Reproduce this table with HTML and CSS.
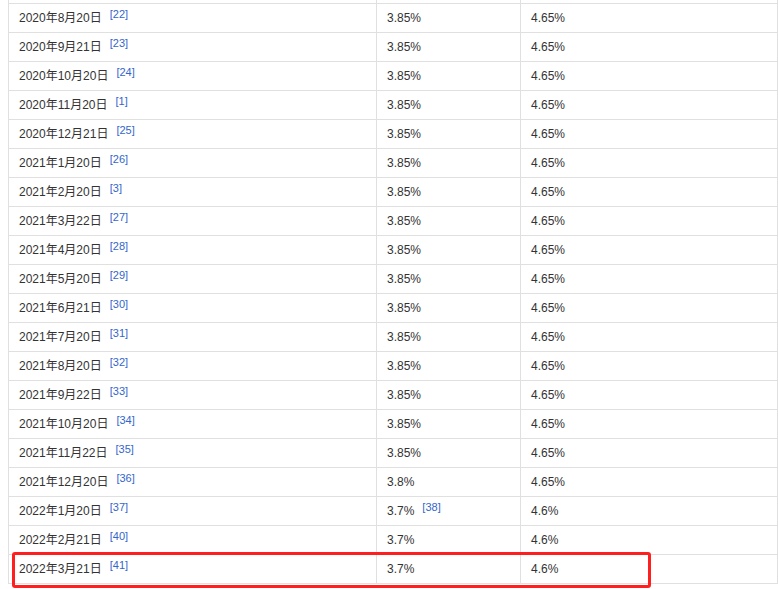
FILE: index.html
```html
<!DOCTYPE html>
<html lang="zh">
<head>
<meta charset="utf-8">
<link rel="stylesheet" href="styles.css">
</head>
<body>
<div class="wrap">
<table class="rates">
<colgroup><col class="c1"><col class="c2"><col class="c3"></colgroup>
<tbody>
<tr class="prev"><td></td><td></td><td></td></tr>
<tr><td>2020年8月20日<sup>[22]</sup></td><td>3.85%</td><td>4.65%</td></tr>
<tr><td>2020年9月21日<sup>[23]</sup></td><td>3.85%</td><td>4.65%</td></tr>
<tr><td>2020年10月20日<sup>[24]</sup></td><td>3.85%</td><td>4.65%</td></tr>
<tr><td>2020年11月20日<sup>[1]</sup></td><td>3.85%</td><td>4.65%</td></tr>
<tr><td>2020年12月21日<sup>[25]</sup></td><td>3.85%</td><td>4.65%</td></tr>
<tr><td>2021年1月20日<sup>[26]</sup></td><td>3.85%</td><td>4.65%</td></tr>
<tr><td>2021年2月20日<sup>[3]</sup></td><td>3.85%</td><td>4.65%</td></tr>
<tr><td>2021年3月22日<sup>[27]</sup></td><td>3.85%</td><td>4.65%</td></tr>
<tr><td>2021年4月20日<sup>[28]</sup></td><td>3.85%</td><td>4.65%</td></tr>
<tr><td>2021年5月20日<sup>[29]</sup></td><td>3.85%</td><td>4.65%</td></tr>
<tr><td>2021年6月21日<sup>[30]</sup></td><td>3.85%</td><td>4.65%</td></tr>
<tr><td>2021年7月20日<sup>[31]</sup></td><td>3.85%</td><td>4.65%</td></tr>
<tr><td>2021年8月20日<sup>[32]</sup></td><td>3.85%</td><td>4.65%</td></tr>
<tr><td>2021年9月22日<sup>[33]</sup></td><td>3.85%</td><td>4.65%</td></tr>
<tr><td>2021年10月20日<sup>[34]</sup></td><td>3.85%</td><td>4.65%</td></tr>
<tr><td>2021年11月22日<sup>[35]</sup></td><td>3.85%</td><td>4.65%</td></tr>
<tr><td>2021年12月20日<sup>[36]</sup></td><td>3.8%</td><td>4.65%</td></tr>
<tr><td>2022年1月20日<sup>[37]</sup></td><td>3.7%<sup>[38]</sup></td><td>4.6%</td></tr>
<tr><td>2022年2月21日<sup>[40]</sup></td><td>3.7%</td><td>4.6%</td></tr>
<tr><td>2022年3月21日<sup>[41]</sup></td><td>3.7%</td><td>4.6%</td></tr>
</tbody>
</table>
<div class="highlight"></div>
</div>
</body>
</html>
```
FILE: styles.css
```css
html {
  overflow: hidden;
}
body {
  margin: 0;
  padding: 0;
  background: #fff;
}
.wrap {
  position: relative;
  padding: 0 0 5px 8px;
  margin-top: -26px;
}
.rates {
  border-collapse: collapse;
  table-layout: fixed;
  width: 769px;
  font-family: "Liberation Sans", Arial, "Noto Sans CJK SC", sans-serif;
  font-size: 12px;
  color: #333;
}
.c1 { width: 368px; }
.c2 { width: 144px; }
.c3 { width: 257px; }
.rates td {
  border: 1px solid #e0e0e0;
  height: 28px;
  padding: 0 10px;
  vertical-align: middle;
  white-space: nowrap;
  line-height: 18px;
}
.rates sup {
  font-size: 11px;
  color: #3366cc;
  margin-left: 8px;
  vertical-align: 4px;
  line-height: 1;
}
.highlight {
  position: absolute;
  left: 12px;
  top: 578px;
  width: 633px;
  height: 30px;
  border: 3px solid #ff1f1f;
  border-radius: 3px;
}
```
